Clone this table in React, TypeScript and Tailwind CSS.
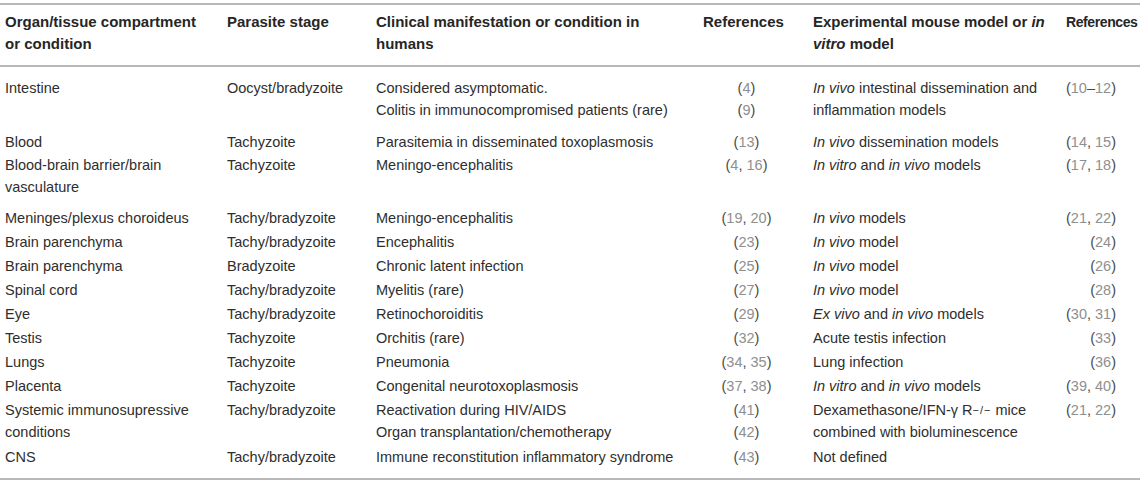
import type { ReactNode } from "react";

type Row = {
  organ: ReactNode;
  stage: string;
  clinical: string[];
  refs: string[];
  model: ReactNode;
  modelRefs: string;
  pb: string;
};

const GRID =
  "grid grid-cols-[227px_149px_314px_113px_256px_81px] w-[1140px]";

const rows: Row[] = [
  {
    organ: "Intestine",
    stage: "Oocyst/bradyzoite",
    clinical: [
      "Considered asymptomatic.",
      "Colitis in immunocompromised patients (rare)",
    ],
    refs: ["(4)", "(9)"],
    model: (
      <>
        <i>In vivo</i> intestinal dissemination and
        <br />
        inflammation models
      </>
    ),
    modelRefs: "(10–12)",
    pb: "pb-[9px]",
  },
  {
    organ: "Blood",
    stage: "Tachyzoite",
    clinical: ["Parasitemia in disseminated toxoplasmosis"],
    refs: ["(13)"],
    model: (
      <>
        <i>In vivo</i> dissemination models
      </>
    ),
    modelRefs: "(14, 15)",
    pb: "pb-[0px]",
  },
  {
    organ: (
      <>
        Blood-brain barrier/brain
        <br />
        vasculature
      </>
    ),
    stage: "Tachyzoite",
    clinical: ["Meningo-encephalitis"],
    refs: ["(4, 16)"],
    model: (
      <>
        <i>In vitro</i> and <i>in vivo</i> models
      </>
    ),
    modelRefs: "(17, 18)",
    pb: "pb-[8px]",
  },
  {
    organ: "Meninges/plexus choroideus",
    stage: "Tachy/bradyzoite",
    clinical: ["Meningo-encephalitis"],
    refs: ["(19, 20)"],
    model: (
      <>
        <i>In vivo</i> models
      </>
    ),
    modelRefs: "(21, 22)",
    pb: "pb-[1px]",
  },
  {
    organ: "Brain parenchyma",
    stage: "Tachy/bradyzoite",
    clinical: ["Encephalitis"],
    refs: ["(23)"],
    model: (
      <>
        <i>In vivo</i> model
      </>
    ),
    modelRefs: "(24)",
    pb: "pb-[1px]",
  },
  {
    organ: "Brain parenchyma",
    stage: "Bradyzoite",
    clinical: ["Chronic latent infection"],
    refs: ["(25)"],
    model: (
      <>
        <i>In vivo</i> model
      </>
    ),
    modelRefs: "(26)",
    pb: "pb-[1px]",
  },
  {
    organ: "Spinal cord",
    stage: "Tachy/bradyzoite",
    clinical: ["Myelitis (rare)"],
    refs: ["(27)"],
    model: (
      <>
        <i>In vivo</i> model
      </>
    ),
    modelRefs: "(28)",
    pb: "pb-[1px]",
  },
  {
    organ: "Eye",
    stage: "Tachy/bradyzoite",
    clinical: ["Retinochoroiditis"],
    refs: ["(29)"],
    model: (
      <>
        <i>Ex vivo</i> and <i>in vivo</i> models
      </>
    ),
    modelRefs: "(30, 31)",
    pb: "pb-[1px]",
  },
  {
    organ: "Testis",
    stage: "Tachyzoite",
    clinical: ["Orchitis (rare)"],
    refs: ["(32)"],
    model: "Acute testis infection",
    modelRefs: "(33)",
    pb: "pb-[1px]",
  },
  {
    organ: "Lungs",
    stage: "Tachyzoite",
    clinical: ["Pneumonia"],
    refs: ["(34, 35)"],
    model: "Lung infection",
    modelRefs: "(36)",
    pb: "pb-[1px]",
  },
  {
    organ: "Placenta",
    stage: "Tachyzoite",
    clinical: ["Congenital neurotoxoplasmosis"],
    refs: ["(37, 38)"],
    model: (
      <>
        <i>In vitro</i> and <i>in vivo</i> models
      </>
    ),
    modelRefs: "(39, 40)",
    pb: "pb-[1px]",
  },
  {
    organ: (
      <>
        Systemic immunosupressive
        <br />
        conditions
      </>
    ),
    stage: "Tachy/bradyzoite",
    clinical: ["Reactivation during HIV/AIDS", "Organ transplantation/chemotherapy"],
    refs: ["(41)", "(42)"],
    model: (
      <>
        Dexamethasone/IFN-γ R
        <sup className="text-[11px] tracking-[1px] relative -top-[1px]">−/−</sup> mice
        <br />
        combined with bioluminescence
      </>
    ),
    modelRefs: "(21, 22)",
    pb: "pb-[2px]",
  },
  {
    organ: "CNS",
    stage: "Tachy/bradyzoite",
    clinical: ["Immune reconstitution inflammatory syndrome"],
    refs: ["(43)"],
    model: "Not defined",
    modelRefs: "",
    pb: "pb-[1px]",
  },
];

// digits grey, brackets and separators dark
function Ref({ text }: { text: string }) {
  const parts = text.split(/(\d+)/).filter((p) => p !== "");
  return (
    <span>
      {parts.map((p, i) =>
        /^\d+$/.test(p) ? (
          <span key={i} className="text-[#8f8f8f]">
            {p}
          </span>
        ) : (
          <span key={i} className="text-[#4a4a4a]">
            {p}
          </span>
        )
      )}
    </span>
  );
}

export default function App() {
  return (
    <div
      className="bg-white min-h-[492px] w-[1146px] pt-[3px] text-[#2e2e2e] text-[14.5px] leading-[22px]"
      style={{ fontFamily: '"Liberation Sans", Arial, sans-serif' }}
    >
      {/* Header */}
      <div
        className={`${GRID} border-t-2 border-b-2 border-[#b8b8b8] pt-[6px] pb-[10px] font-bold text-[15px] text-[#262626]`}
      >
        <div className="pl-[5px] whitespace-nowrap">
          Organ/tissue compartment
          <br />
          or condition
        </div>
        <div>Parasite stage</div>
        <div className="whitespace-nowrap">
          Clinical manifestation or condition in
          <br />
          humans
        </div>
        <div className="pl-[13px]">References</div>
        <div className="pl-[10px] whitespace-nowrap">
          Experimental mouse model or <i>in</i>
          <br />
          <i>vitro</i> model
        </div>
        <div className="pl-[7px] whitespace-nowrap text-[14px] tracking-[-0.4px]">
          References
        </div>
      </div>

      {/* Body */}
      <div className="w-[1140px] border-b-2 border-[#b8b8b8] pt-[9px] pb-[9px]">
        {rows.map((r, i) => (
          <div key={i} className={`${GRID} pt-[1px] ${r.pb}`}>
            <div className="pl-[5px]">{r.organ}</div>
            <div>{r.stage}</div>
            <div>
              {r.clinical.map((c, j) => (
                <div key={j}>{c}</div>
              ))}
            </div>
            <div className="text-center">
              {r.refs.map((c, j) => (
                <div key={j}>
                  <Ref text={c} />
                </div>
              ))}
            </div>
            <div className="pl-[10px] whitespace-nowrap">{r.model}</div>
            <div className="text-right pr-[24px]">
              {r.modelRefs && <Ref text={r.modelRefs} />}
            </div>
          </div>
        ))}
      </div>
    </div>
  );
}
